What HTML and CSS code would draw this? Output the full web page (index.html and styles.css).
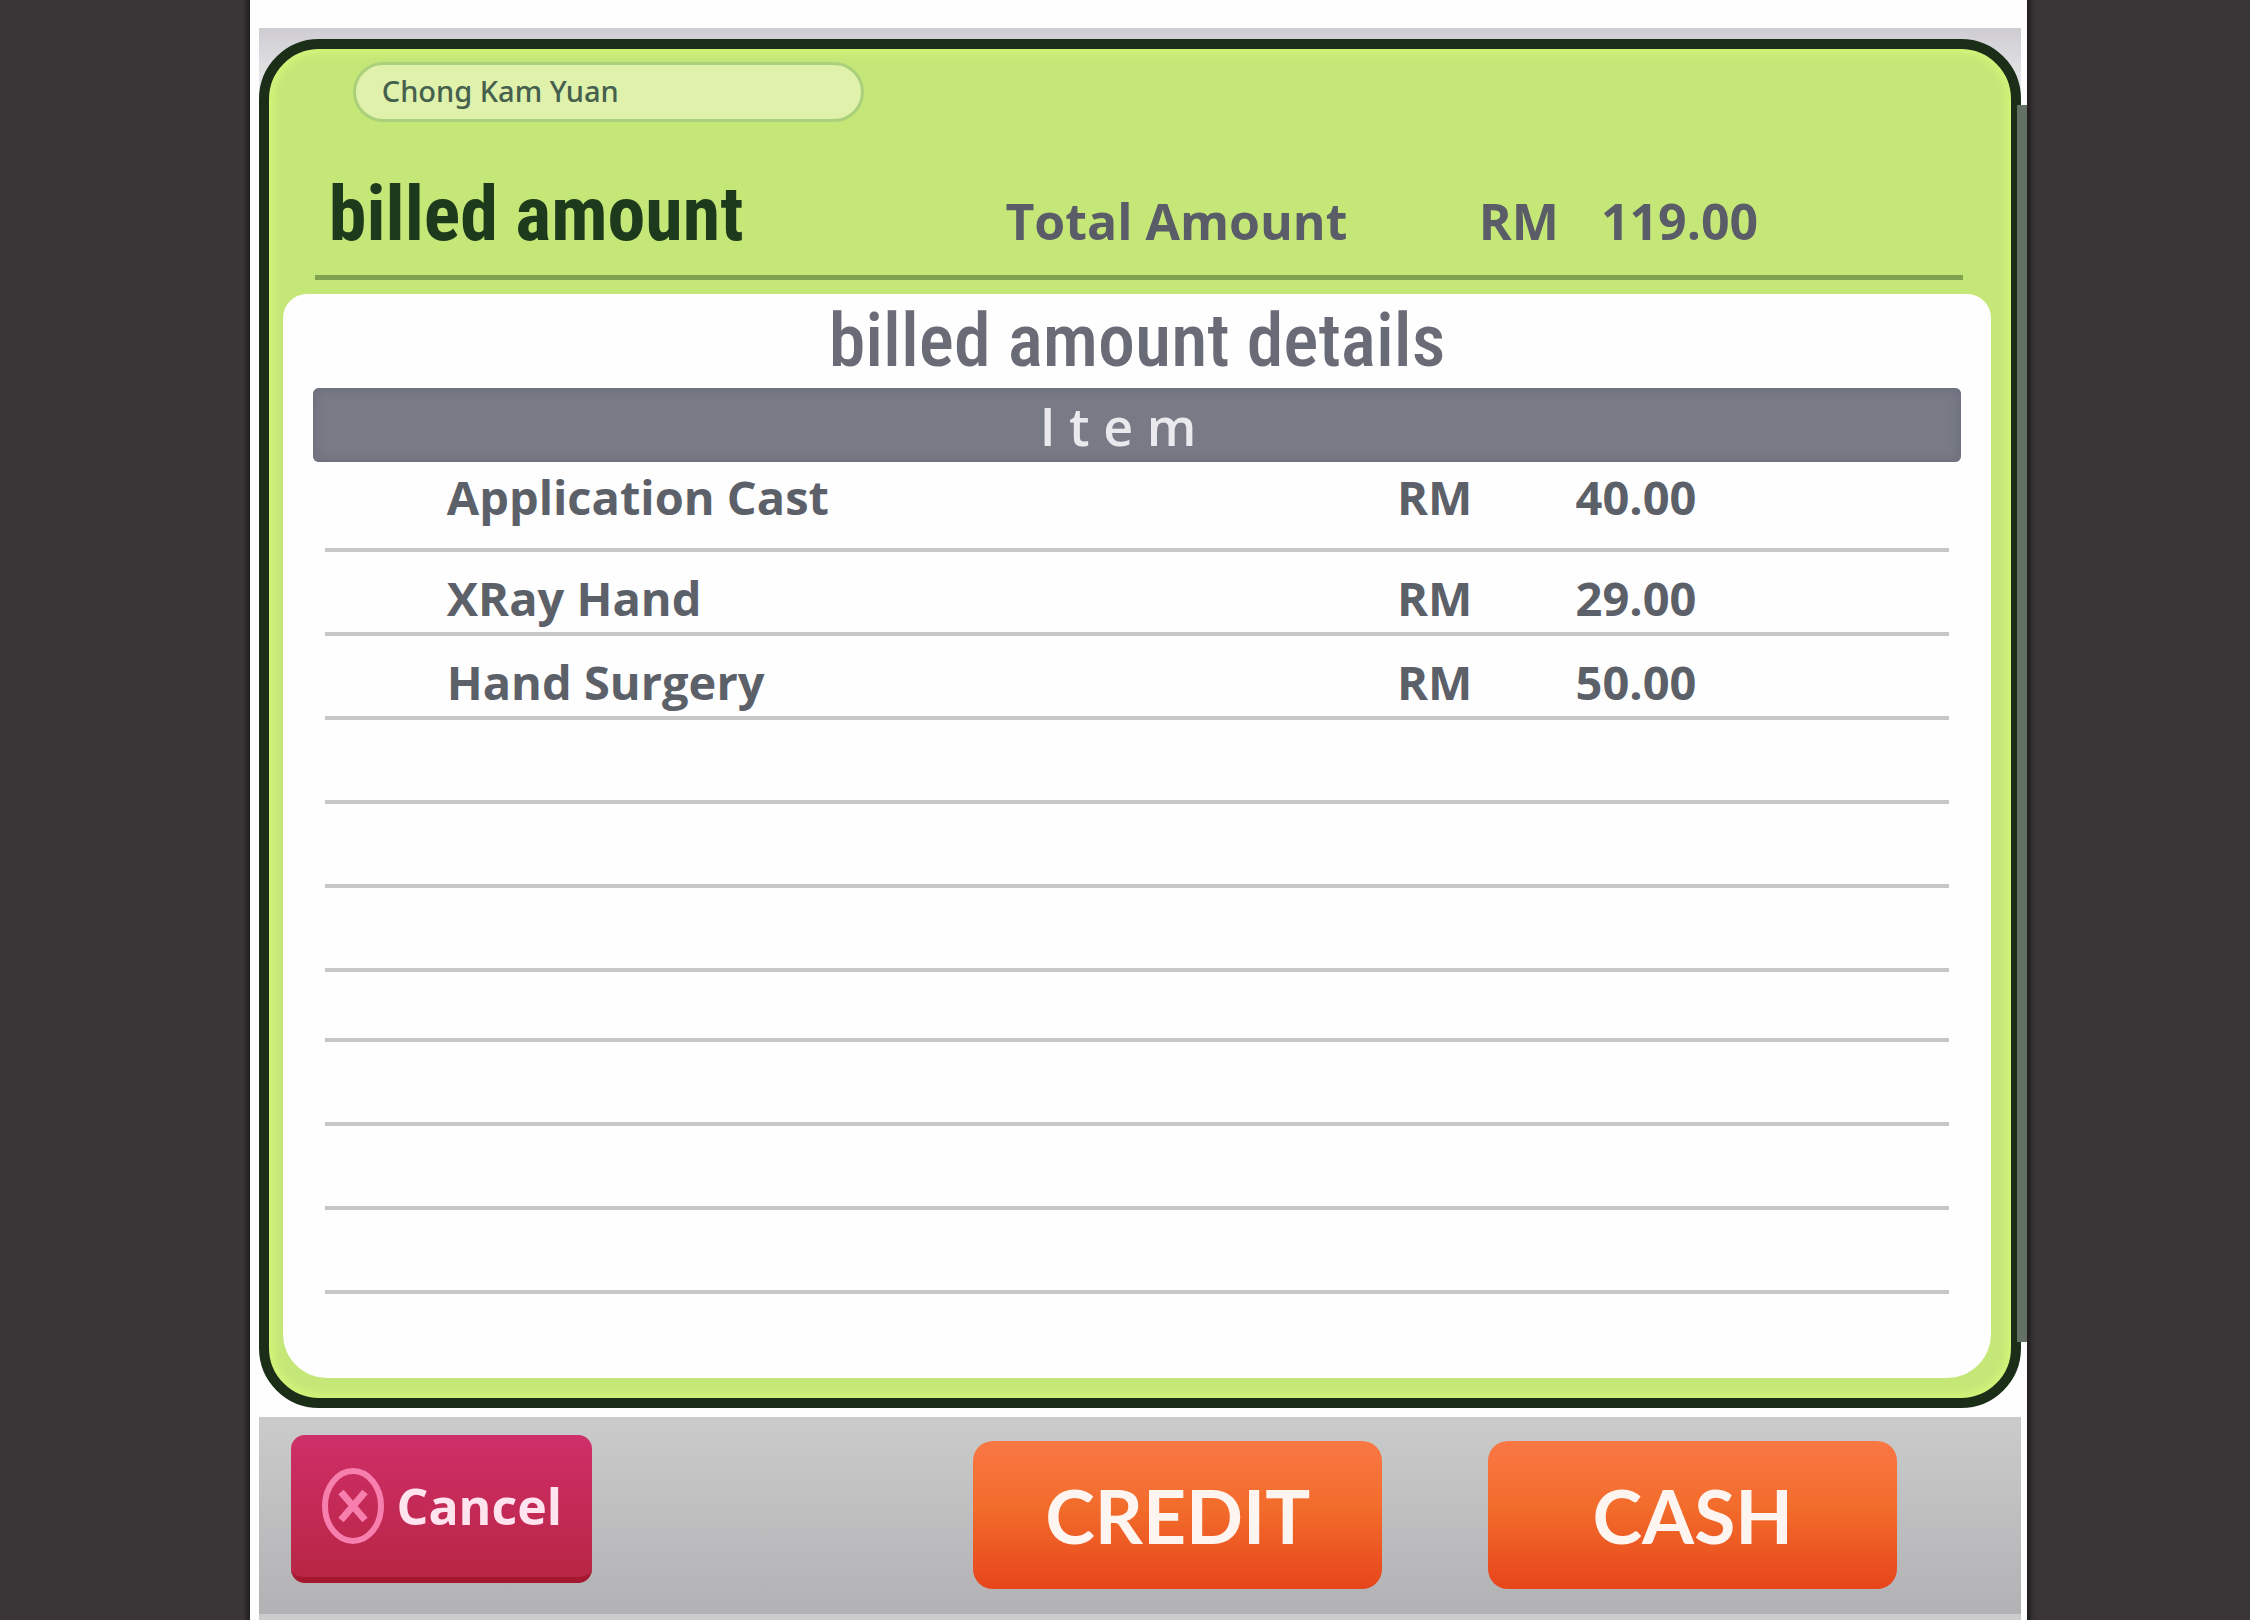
FILE: index.html
```html
<!DOCTYPE html>
<html lang="en">
<head>
    <meta charset="UTF-8">
    <title>Billed amount</title>
    <link rel="stylesheet" href="styles.css">
</head>
<body>

<div class="screen">
    <!-- bill -->
    <main class="bill">
        <header class="bill-head">
            <input class="patient" type="text" value="Chong Kam Yuan" aria-label="Patient name" readonly>
            <div class="total">
                <h1>billed amount</h1>
                <span>Total Amount</span>
                <span>RM</span>
                <span>119.00</span>
            </div>
        </header>

        <section class="details">
            <h2>billed amount details</h2>
            <table class="items">
                <colgroup>
                    <col class="col-name">
                    <col class="col-currency">
                    <col>
                </colgroup>
                <thead>
                    <tr><th colspan="3"><div class="bar">I t e m</div></th></tr>
                </thead>
                <tbody>
                    <tr class="first"><td class="name">Application Cast</td><td>RM</td><td>40.00</td></tr>
                    <tr><td class="name">XRay Hand</td><td>RM</td><td>29.00</td></tr>
                    <tr><td class="name">Hand Surgery</td><td>RM</td><td>50.00</td></tr>
                    <tr><td colspan="3"></td></tr>
                    <tr><td colspan="3"></td></tr>
                    <tr><td colspan="3"></td></tr>
                    <tr class="short"><td colspan="3"></td></tr>
                    <tr><td colspan="3"></td></tr>
                    <tr><td colspan="3"></td></tr>
                    <tr><td colspan="3"></td></tr>
                </tbody>
            </table>
        </section>
    </main>

    <!-- buttons -->
    <footer class="actions">
        <button class="btn cancel" type="button">
            <svg class="icon" viewBox="0 0 64 78" fill="none" stroke="#f77fae" aria-hidden="true">
                <ellipse cx="32" cy="39" rx="28" ry="35" stroke-width="6"/>
                <path d="M20 25L44 53M44 25L20 53" stroke-width="7"/>
            </svg>
            Cancel
        </button>
        <button class="btn pay" type="button">CREDIT</button>
        <button class="btn pay" type="button">CASH</button>
    </footer>
</div>

</body>
</html>
```

FILE: styles.css
```css
* {
    box-sizing: border-box;
}

body, h1, h2 {
    margin: 0;
    padding: 0;
}

body {
    background: #3a3637;
    font-family: "Open Sans", "Noto Sans", sans-serif;
    color: #5a5d68;
}

.screen {
    display: flex;
    flex-direction: column;
    width: 79%;
    min-height: 100vh;
    margin-left: 11.1%;
    padding: 0 6px 0 9px;
    background: #fdfefd;
    box-shadow: 0 0 4px 4px #242021;
}

/* bill */
.bill {
    position: relative;
    margin-top: 39px;
    border: 10px solid #1b2e17;
    border-radius: 60px;
    background: #c5e778;
    box-shadow: inset 0 0 6px 5px #d0f479;
}

.screen::before {
    content: "";
    height: 110px;
    margin-top: 28px;
    margin-bottom: -138px;
    background: linear-gradient(#cfcdd2, #fdfefd);
}

/* bezel strip beside the frame */
.bill::after {
    content: "";
    position: absolute;
    top: 56px;
    right: -16px;
    bottom: 56px;
    width: 10px;
    background: #647063;
}

.bill-head {
    padding: 13px 48px 14px 46px;
}

.patient {
    display: block;
    width: 31%;
    height: 60px;
    margin-left: 38px;
    padding: 0 26px 4px;
    border: 3px solid #abd07b;
    border-radius: 30px;
    background: #dff1ab;
    font: 500 29px "Noto Sans", sans-serif;
    color: #46604e;
}

.total {
    display: grid;
    grid-template-columns: 690fr 473fr 122fr 362fr;
    align-items: baseline;
    height: 158px;
    padding-top: 34px;
    border-bottom: 5px solid #7fa150;
    font-size: 50px;
    font-weight: 700;
}

.total h1 {
    padding-left: 14px;
    font: bold 76px/116px "Roboto Condensed", Roboto, sans-serif;
    white-space: nowrap;
    color: #1e3a1c;
}

.details {
    margin: 0 20px 20px 14px;
    padding: 0 42px 84px;
    border-radius: 24px 24px 44px 44px;
    background: #fefefe;
}

.details h2 {
    height: 94px;
    font: 500 74px/94px "Roboto Condensed", Roboto, sans-serif;
    text-align: center;
    color: #696b76;
}

.items {
    width: 100%;
    border-collapse: collapse;
    table-layout: fixed;
}

.col-name {
    width: 66%;
}

.col-currency {
    width: 11%;
}

.items th {
    padding: 0;
}

.bar {
    height: 74px;
    margin: 0 -12px;
    padding-right: 38px;
    border-radius: 6px;
    background: #787a86;
    box-shadow: inset 0 0 8px 3px #6d707d;
    font-size: 52px;
    font-weight: 600;
    line-height: 76px;
    color: #e9e9ee;
}

.items td {
    height: 84px;
    padding: 12px 0 0;
    border-bottom: 4px solid #c8c7c8;
    font-size: 47px;
    font-weight: 700;
    line-height: 60px;
    white-space: nowrap;
    color: #5c6069;
}

.items .first td {
    height: 88px;
    padding-top: 0;
    padding-bottom: 16px;
}

.items .short td {
    height: 70px;
}

.items td.name {
    padding-left: 122px;
}

/* buttons */
.actions {
    display: flex;
    flex: 1;
    align-items: flex-start;
    margin-top: 9px;
    padding: 18px 124px 0 32px;
    border-bottom: 6px solid #cbcdcd;
    background: linear-gradient(#cacbca, #b2b2b5);
}

.btn {
    display: flex;
    align-items: center;
    justify-content: center;
    height: 148px;
    padding: 0;
    border: 0;
    color: #fff5f0;
    cursor: pointer;
}

.cancel {
    gap: 12px;
    width: 301px;
    margin-right: auto;
    border-bottom: 6px solid #a5182f;
    border-radius: 14px;
    background: linear-gradient(#cf2f68, #c52a58 45%, #b72644);
    font: bold 50px "Open Sans", sans-serif;
    color: #ffe3ee;
}

.icon {
    width: 64px;
    height: 78px;
}

.pay {
    width: 409px;
    margin-top: 6px;
    border-radius: 20px;
    background: linear-gradient(#f97744, #f26c2b 45%, #e7451b);
    font: bold 75px Lato, sans-serif;
}

.pay + .pay {
    margin-left: 106px;
}
```
